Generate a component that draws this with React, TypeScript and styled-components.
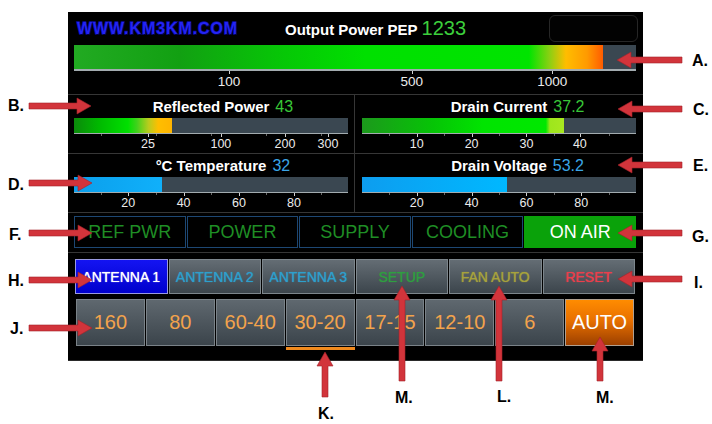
import React from "react";
import styled, { createGlobalStyle } from "styled-components";

const Global = createGlobalStyle`
  html, body { margin: 0; padding: 0; background: #ffffff; }
  body { font-family: "Liberation Sans", Arial, Helvetica, sans-serif; }
  * { box-sizing: border-box; }
`;

const Page = styled.div`
  position: relative;
  width: 712px;
  height: 424px;
  overflow: hidden;
  padding: 12px 0 0 68px;
`;

const Panel = styled.div`
  width: 575px;
  height: 349px;
  background: #000;
  display: flex;
  flex-direction: column;
  border-bottom: 1px solid #2a2a2a;
`;

/* ---------- header ---------- */
const Header = styled.div`
  height: 33px;
  display: flex;
  align-items: center;
  padding: 0 5px 0 9px;
`;

const Logo = styled.div`
  width: 208px;
  font-weight: 700;
  font-size: 16px;
  letter-spacing: 0.9px;
  color: #2424f4;
  -webkit-text-stroke: 1.3px #0c0c9c;
  paint-order: stroke fill;
  text-shadow: 1px 1px 0 #000040;
  white-space: nowrap;
`;

const Title = styled.div`
  display: flex;
  align-items: baseline;
  gap: 4px;
  white-space: nowrap;
`;

const TitleLabel = styled.span`
  color: #fff;
  font-weight: 700;
  font-size: 15px;
`;

const TitleValue = styled.span<{ $color: string; $size: number }>`
  color: ${(p) => p.$color};
  font-size: ${(p) => p.$size}px;
`;

const BlankBox = styled.div`
  margin-left: auto;
  width: 89px;
  height: 27px;
  border: 1px solid #262626;
  border-radius: 6px;
  background: #020202;
`;

/* ---------- bars ---------- */
const BarSection = styled.div`
  padding: 0 7px 0 6px;
`;

const Bar = styled.div<{ $h: number }>`
  height: ${(p) => p.$h}px;
  display: flex;
  background: #3a4751;
  border-bottom: ${(p) => (p.$h > 20 ? 2 : 1)}px solid #a3acb0;
`;

const Fill = styled.div<{ $bg: string }>`
  height: 100%;
  background: ${(p) => p.$bg};
`;

const Axis = styled.div<{ $h: number; $size: number }>`
  position: relative;
  height: ${(p) => p.$h}px;
  font-size: ${(p) => p.$size}px;
  color: #ececec;
`;

const TickLabel = styled.span<{ $top: number }>`
  position: absolute;
  top: ${(p) => p.$top}px;
  transform: translateX(-50%);
  line-height: 1;
`;

const TickMark = styled.span<{ $major?: boolean }>`
  position: absolute;
  top: 0;
  width: 1px;
  height: ${(p) => (p.$major ? 3 : 2)}px;
  background: ${(p) => (p.$major ? "#d0d0d0" : "#6a6a6a")};
`;

/* ---------- meters ---------- */
const Meters = styled.div`
  display: grid;
  grid-template-columns: 287px 288px;
  border-top: 1px solid #363636;
`;

const MeterCell = styled.div<{ $left: boolean }>`
  height: 59px;
  padding: ${(p) => (p.$left ? "0 6px" : "0 7px")};
  border-bottom: 1px solid #363636;
  border-right: ${(p) => (p.$left ? "1px solid #363636" : "none")};
`;

const MeterTitle = styled.div`
  height: 23px;
  line-height: 23px;
  display: grid;
  grid-template-columns: 1fr auto 1fr;
  align-items: baseline;
  white-space: nowrap;
`;

const MeterLabel = styled.span`
  grid-column: 2;
  color: #fff;
  font-weight: 700;
  font-size: 15px;
`;

const MeterValue = styled.span<{ $color: string }>`
  grid-column: 3;
  margin-left: 6px;
  color: ${(p) => p.$color};
  font-size: 16px;
`;

/* ---------- status ---------- */
const StatusRow = styled.div`
  padding: 3px 7px 4px 6px;
  border-bottom: 1px solid #363636;
  display: grid;
  grid-template-columns: repeat(5, 1fr);
  gap: 1px;
`;

const StatusCell = styled.div<{ $on?: boolean }>`
  height: 32px;
  display: flex;
  align-items: center;
  justify-content: center;
  font-size: 18px;
  border: 1px solid ${(p) => (p.$on ? "#0aa20a" : "#1d4773")};
  background: ${(p) => (p.$on ? "#0aa20a" : "#000")};
  color: ${(p) => (p.$on ? "#ffffff" : "#1f8e25")};
  white-space: nowrap;
`;

/* ---------- antenna / function buttons ---------- */
const ButtonRow = styled.div`
  padding: 6px 8px 0 7px;
  display: grid;
  grid-template-columns: repeat(6, 1fr);
  gap: 1px;
`;

const FuncButton = styled.div<{ $color: string; $active?: boolean }>`
  height: 35px;
  display: flex;
  align-items: center;
  justify-content: center;
  font-size: 14px;
  white-space: nowrap;
  color: ${(p) => p.$color};
  border: 1px solid ${(p) => (p.$active ? "#9a9ae0" : "#7d868c")};
  background: ${(p) =>
    p.$active
      ? "linear-gradient(#1414f2, #0000cc)"
      : "linear-gradient(#646d74, #3c454c)"};
  text-shadow: 0 0 1px ${(p) => p.$color};
`;

/* ---------- band buttons ---------- */
const BandRow = styled.div`
  padding: 5px 9px 0 8px;
  display: grid;
  grid-template-columns: repeat(8, 1fr);
  gap: 1px;
`;

const BandItem = styled.div`
  display: flex;
  flex-direction: column;
`;

const BandButton = styled.div<{ $auto?: boolean }>`
  height: 47px;
  display: flex;
  align-items: center;
  justify-content: center;
  font-size: 20px;
  white-space: nowrap;
  color: ${(p) => (p.$auto ? "#ffffff" : "#f3a34c")};
  border: 1px solid ${(p) => (p.$auto ? "#b0a090" : "#7a8288")};
  background: ${(p) =>
    p.$auto
      ? "linear-gradient(#ff8c00, #e87000 45%, #9c4000)"
      : "linear-gradient(#5f686f, #3b444b)"};
`;

const Indicator = styled.div<{ $on: boolean }>`
  height: 3px;
  margin-top: 1px;
  background: ${(p) => (p.$on ? "#f08a1e" : "transparent")};
`;

/* ---------- annotations ---------- */
const Overlay = styled.div`
  position: absolute;
  left: 0;
  top: 0;
  width: 712px;
  height: 424px;
  pointer-events: none;
`;

const ArrowSvg = styled.svg`
  position: absolute;
  left: 0;
  top: 0;
`;

const Note = styled.span<{ $x: number; $y: number }>`
  position: absolute;
  left: ${(p) => p.$x}px;
  top: ${(p) => p.$y - 9}px;
  line-height: 18px;
  font-size: 16px;
  font-weight: 700;
  color: #000;
`;

type Tick = { label: string; pos: number };

const mainTicks: Tick[] = [
  { label: "100", pos: 27.6 },
  { label: "500", pos: 60.1 },
  { label: "1000", pos: 85.1 },
];

const mainGradient =
  "linear-gradient(90deg, #22aa22 0%, #12a012 20%, #06c806 40%, #00e000 55%, #00e400 86%, #8fcf12 90%, #ffbd00 93%, #ff9a00 97%, #ff5c00 100%)";

type MeterDef = {
  title: string;
  value: string;
  color: string;
  fill: number;
  bg: string;
  ticks: Tick[];
};

const meters: MeterDef[] = [
  {
    title: "Reflected Power",
    value: "43",
    color: "#38c738",
    fill: 35.8,
    bg: "linear-gradient(90deg, #0b8a0b 0%, #00b800 25%, #00e000 55%, #3fd21c 64%, #b8cc1e 76%, #ffbe00 86%, #ffb400 100%)",
    ticks: [
      { label: "25", pos: 27 },
      { label: "100", pos: 53.6 },
      { label: "200", pos: 77 },
      { label: "300", pos: 92.7 },
    ],
  },
  {
    title: "Drain Current",
    value: "37.2",
    color: "#38c738",
    fill: 73.7,
    bg: "linear-gradient(90deg, #1c991c 0%, #06c406 35%, #00e400 60%, #00e800 91%, #9ee61c 93%, #a8e820 100%)",
    ticks: [
      { label: "10", pos: 20 },
      { label: "20", pos: 40 },
      { label: "30", pos: 60 },
      { label: "40", pos: 79.5 },
    ],
  },
  {
    title: "°C Temperature",
    value: "32",
    color: "#3ba6e6",
    fill: 32.1,
    bg: "linear-gradient(90deg, #0b9fec, #10b0fa)",
    ticks: [
      { label: "20", pos: 19.8 },
      { label: "40", pos: 40 },
      { label: "60", pos: 60.2 },
      { label: "80", pos: 80.3 },
    ],
  },
  {
    title: "Drain Voltage",
    value: "53.2",
    color: "#3ba6e6",
    fill: 53,
    bg: "linear-gradient(90deg, #0d9def, #00b8ff)",
    ticks: [
      { label: "20", pos: 20 },
      { label: "40", pos: 40 },
      { label: "60", pos: 60 },
      { label: "80", pos: 80 },
    ],
  },
];

const minorTicks = [10, 30, 50, 70, 90];

const statuses = [
  { label: "REF PWR" },
  { label: "POWER" },
  { label: "SUPPLY" },
  { label: "COOLING" },
  { label: "ON AIR", on: true },
];

const funcButtons = [
  { label: "ANTENNA 1", color: "#ffffff", active: true },
  { label: "ANTENNA 2", color: "#2e9fcc" },
  { label: "ANTENNA 3", color: "#2e9fcc" },
  { label: "SETUP", color: "#2f9e40" },
  { label: "FAN AUTO", color: "#a6a23c" },
  { label: "RESET", color: "#ea3f4c" },
];

const bands = ["160", "80", "60-40", "30-20", "17-15", "12-10", "6", "AUTO"];

type ArrowDef = { x1: number; y1: number; x2: number; y2: number };

const arrows: ArrowDef[] = [
  { x1: 29, y1: 106, x2: 91, y2: 106 },
  { x1: 29, y1: 183, x2: 92, y2: 183 },
  { x1: 29, y1: 233, x2: 92, y2: 233 },
  { x1: 29, y1: 280, x2: 92, y2: 280 },
  { x1: 29, y1: 328, x2: 92, y2: 328 },
  { x1: 682, y1: 60, x2: 617, y2: 60 },
  { x1: 682, y1: 109, x2: 618, y2: 109 },
  { x1: 682, y1: 165, x2: 618, y2: 165 },
  { x1: 682, y1: 233, x2: 618, y2: 233 },
  { x1: 682, y1: 279, x2: 618, y2: 279 },
  { x1: 325, y1: 397, x2: 325, y2: 352 },
  { x1: 402, y1: 381, x2: 402, y2: 286 },
  { x1: 499, y1: 381, x2: 499, y2: 286 },
  { x1: 600, y1: 381, x2: 600, y2: 337 },
];

const notes = [
  { t: "A.", x: 692, y: 61 },
  { t: "B.", x: 8, y: 106 },
  { t: "C.", x: 693, y: 110 },
  { t: "D.", x: 8, y: 185 },
  { t: "E.", x: 693, y: 166 },
  { t: "F.", x: 9, y: 235 },
  { t: "G.", x: 692, y: 237 },
  { t: "H.", x: 8, y: 281 },
  { t: "I.", x: 694, y: 283 },
  { t: "J.", x: 10, y: 329 },
  { t: "K.", x: 318, y: 414 },
  { t: "M.", x: 395, y: 398 },
  { t: "L.", x: 497, y: 397 },
  { t: "M.", x: 596, y: 398 },
];

function arrowPoints(a: ArrowDef): string {
  const dx = a.x2 - a.x1;
  const dy = a.y2 - a.y1;
  const len = Math.hypot(dx, dy);
  const ux = dx / len;
  const uy = dy / len;
  const px = -uy;
  const py = ux;
  const head = 14;
  const hw = 8;
  const sw = 3;
  const bx = a.x2 - ux * head;
  const by = a.y2 - uy * head;
  const pts = [
    [a.x1 + px * sw, a.y1 + py * sw],
    [bx + px * sw, by + py * sw],
    [bx + px * hw, by + py * hw],
    [a.x2, a.y2],
    [bx - px * hw, by - py * hw],
    [bx - px * sw, by - py * sw],
    [a.x1 - px * sw, a.y1 - py * sw],
  ];
  return pts.map((p) => `${p[0].toFixed(1)},${p[1].toFixed(1)}`).join(" ");
}

const AxisTicks: React.FC<{ ticks: Tick[]; top: number; minor?: boolean }> = ({
  ticks,
  top,
  minor,
}) => (
  <>
    {minor &&
      minorTicks.map((m) => <TickMark key={"m" + m} style={{ left: `${m}%` }} />)}
    {ticks.map((t) => (
      <React.Fragment key={t.label}>
        <TickMark $major style={{ left: `${t.pos}%` }} />
        <TickLabel $top={top} style={{ left: `${t.pos}%` }}>
          {t.label}
        </TickLabel>
      </React.Fragment>
    ))}
  </>
);

export default function App() {
  return (
    <>
      <Global />
      <Page>
        <Panel>
          <Header>
            <Logo>WWW.KM3KM.COM</Logo>
            <Title>
              <TitleLabel>Output Power PEP</TitleLabel>
              <TitleValue $color="#3ccf3c" $size={20}>
                1233
              </TitleValue>
            </Title>
            <BlankBox />
          </Header>

          <BarSection>
            <Bar $h={26}>
              <Fill $bg={mainGradient} style={{ width: "94.1%" }} />
            </Bar>
            <Axis $h={23} $size={13.5}>
              <AxisTicks ticks={mainTicks} top={4} />
            </Axis>
          </BarSection>

          <Meters>
            {meters.map((m, i) => (
              <MeterCell key={m.title} $left={i % 2 === 0}>
                <MeterTitle>
                  <MeterLabel>{m.title}</MeterLabel>
                  <MeterValue $color={m.color}>{m.value}</MeterValue>
                </MeterTitle>
                <Bar $h={16}>
                  <Fill $bg={m.bg} style={{ width: `${m.fill}%` }} />
                </Bar>
                <Axis $h={19} $size={12.5}>
                  <AxisTicks ticks={m.ticks} top={4} minor />
                </Axis>
              </MeterCell>
            ))}
          </Meters>

          <StatusRow>
            {statuses.map((s) => (
              <StatusCell key={s.label} $on={s.on}>
                {s.label}
              </StatusCell>
            ))}
          </StatusRow>

          <ButtonRow>
            {funcButtons.map((b) => (
              <FuncButton key={b.label} $color={b.color} $active={b.active}>
                {b.label}
              </FuncButton>
            ))}
          </ButtonRow>

          <BandRow>
            {bands.map((b) => (
              <BandItem key={b}>
                <BandButton $auto={b === "AUTO"}>{b}</BandButton>
                <Indicator $on={b === "30-20"} />
              </BandItem>
            ))}
          </BandRow>
        </Panel>

        <Overlay>
          <ArrowSvg width={712} height={424} viewBox="0 0 712 424">
            {arrows.map((a, i) => (
              <polygon
                key={i}
                points={arrowPoints(a)}
                fill="#d2343b"
                stroke="#a4222a"
                strokeWidth={0.6}
              />
            ))}
          </ArrowSvg>
          {notes.map((n, i) => (
            <Note key={i} $x={n.x} $y={n.y}>
              {n.t}
            </Note>
          ))}
        </Overlay>
      </Page>
    </>
  );
}
